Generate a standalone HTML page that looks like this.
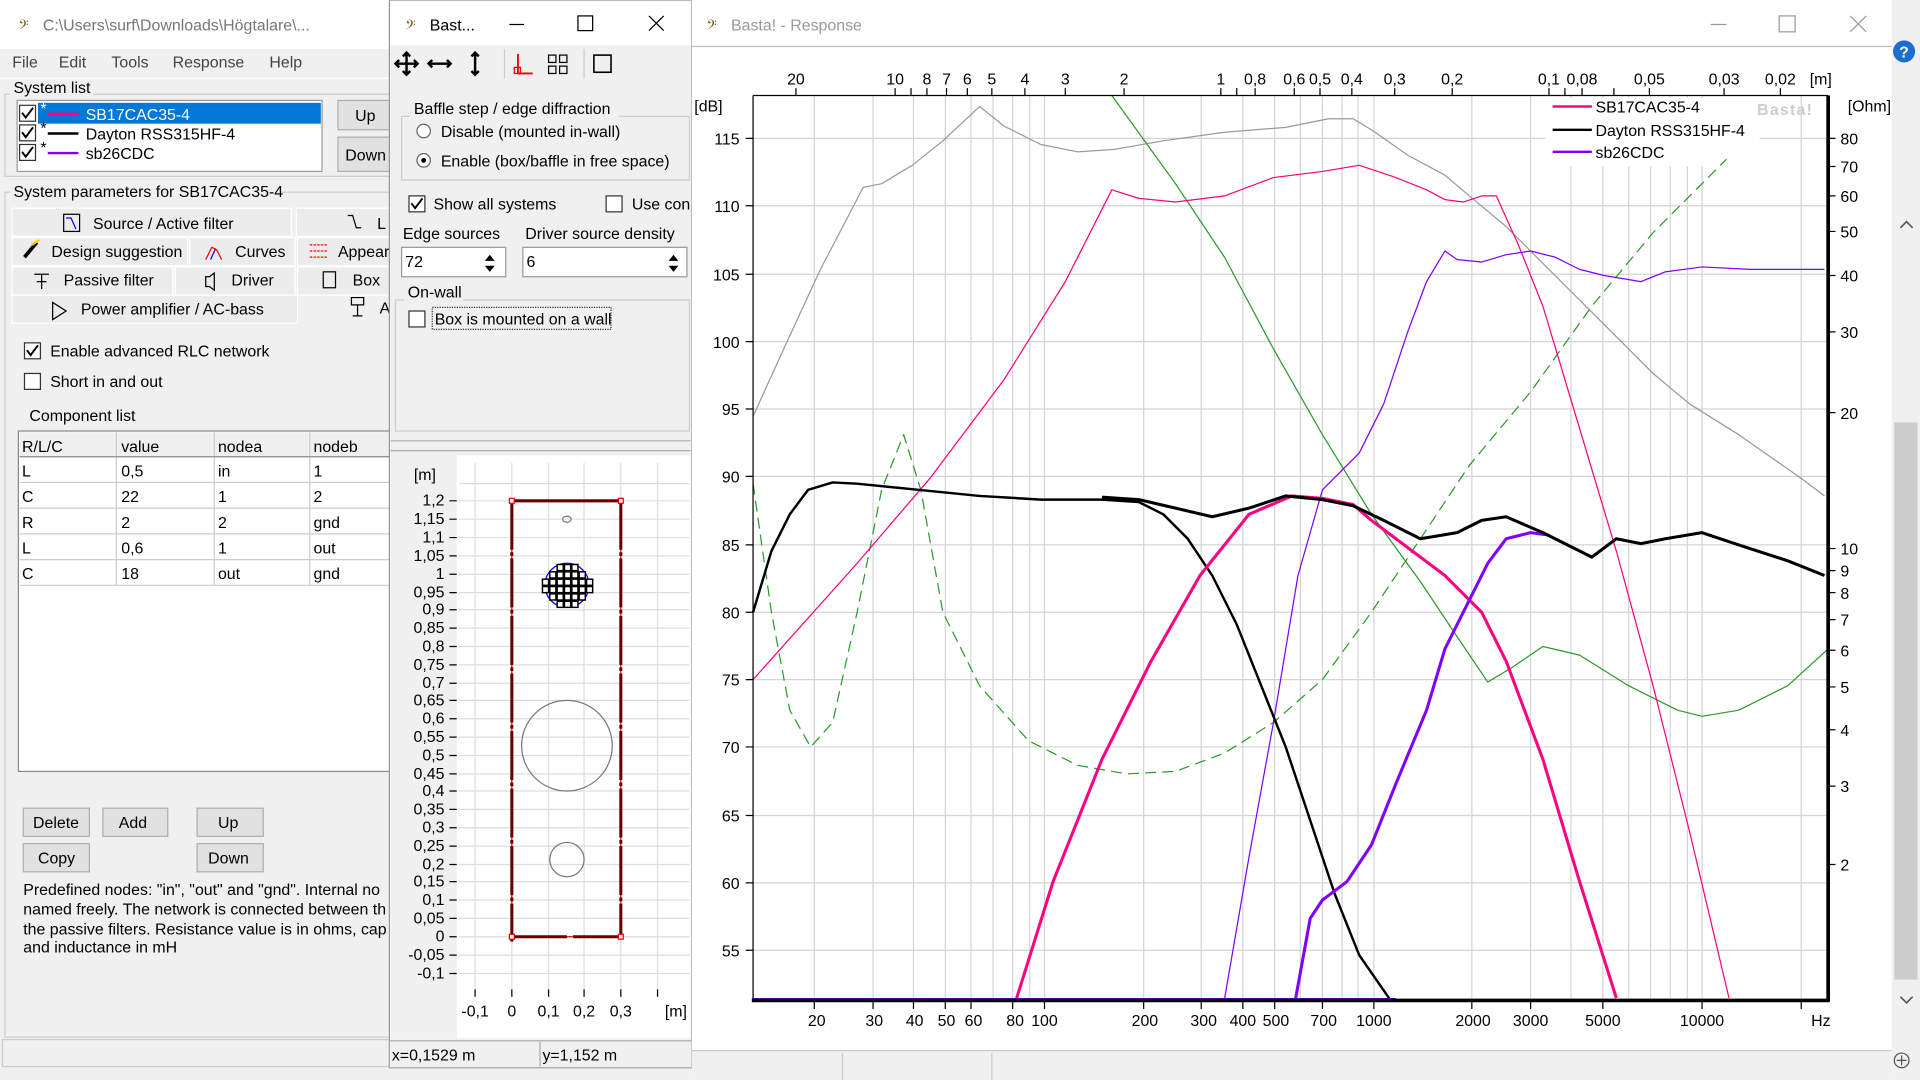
<!DOCTYPE html>
<html><head><meta charset="utf-8"><style>
html,body{margin:0;padding:0;width:1920px;height:1080px;overflow:hidden;background:#f0f0f0}
svg{display:block}
text{font-family:"Liberation Sans","DejaVu Sans",sans-serif;font-size:13px}
</style></head><body>
<svg width="1920" height="1080" viewBox="0 0 1568 882" preserveAspectRatio="none" xmlns="http://www.w3.org/2000/svg">
<rect x="0" y="0" width="1568" height="882" fill="#f0f0f0"/>
<!-- LEFT WINDOW -->
<rect x="0" y="0" width="320" height="40" fill="#fff"/>
<text x="15" y="26" font-size="18" fill="#7a6a20" font-family="DejaVu Sans">𝄢</text>
<text x="35" y="25" font-size="14" fill="#777">C:\Users\surf\Downloads\Högtalare\...</text>
<text x="10" y="55" font-size="14" fill="#444">File</text><text x="48" y="55" font-size="14" fill="#444">Edit</text><text x="91" y="55" font-size="14" fill="#444">Tools</text><text x="141" y="55" font-size="14" fill="#444">Response</text><text x="220" y="55" font-size="14" fill="#444">Help</text>
<line x1="0" y1="64" x2="320" y2="64" stroke="#fff"/>
<rect x="4" y="77" width="320" height="67" fill="none" stroke="#ccc"/>
<rect x="8" y="66" width="68" height="14" fill="#f0f0f0"/><text x="11" y="76">System list</text>
<rect x="14" y="82" width="249" height="58" fill="#fff" stroke="#999"/>
<rect x="31" y="84" width="231" height="17" fill="#0078d7"/>
<g fill="#fff" stroke="#333"><rect x="16" y="86" width="13" height="13"/><rect x="16" y="102" width="13" height="13"/><rect x="16" y="118" width="13" height="13"/></g>
<g fill="none" stroke="#000" stroke-width="1.6"><path d="M18 92l3 4 6-8M18 108l3 4 6-8M18 124l3 4 6-8"/></g>
<text x="33" y="93" font-size="9" fill="#fff">*</text><text x="33" y="109" font-size="9">*</text><text x="33" y="125" font-size="9">*</text>
<line x1="39" y1="93" x2="64" y2="93" stroke="#ff0080" stroke-width="2"/>
<line x1="39" y1="109" x2="64" y2="109" stroke="#000" stroke-width="2"/>
<line x1="39" y1="125" x2="64" y2="125" stroke="#8000ff" stroke-width="2"/>
<text x="70" y="98" fill="#fff">SB17CAC35-4</text><text x="70" y="114">Dayton RSS315HF-4</text><text x="70" y="130">sb26CDC</text>
<rect x="276" y="82" width="44" height="24" fill="#e1e1e1" stroke="#adadad"/><text x="290" y="99">Up</text>
<rect x="276" y="112" width="44" height="28" fill="#e1e1e1" stroke="#adadad"/><text x="282" y="131">Down</text>
<rect x="4" y="157" width="320" height="690" fill="none" stroke="#ccc"/>
<rect x="8" y="149" width="222" height="14" fill="#f0f0f0"/><text x="11" y="161">System parameters for SB17CAC35-4</text>
<g fill="#ececec" stroke="#fff">
<rect x="10" y="170" width="228" height="23"/><rect x="242" y="170" width="80" height="23"/>
<rect x="10" y="194" width="143" height="23"/><rect x="155" y="194" width="86" height="23"/><rect x="243" y="194" width="80" height="23"/>
<rect x="10" y="218" width="131" height="23"/><rect x="143" y="218" width="98" height="23"/><rect x="243" y="218" width="80" height="23"/>
<rect x="10" y="241" width="233" height="23"/></g>
<rect x="52" y="175" width="13" height="14" fill="none" stroke="#000"/><path d="M54 178h4l4 9" stroke="#00f" fill="none"/>
<text x="76" y="187">Source / Active filter</text>
<path d="M284 176l4 0 3 10 4 0" stroke="#000" fill="none"/><text x="308" y="187">L</text>
<path d="M20 210l10-12" stroke="#000" stroke-width="3"/><path d="M26 200l6-4" stroke="#fc0" stroke-width="2"/>
<text x="42" y="210">Design suggestion</text>
<path d="M168 212l5-10 4 2 4 8" stroke="#f00" fill="none"/><path d="M172 212l4-9" stroke="#00f"/>
<text x="192" y="210">Curves</text>
<path d="M253 200h14M253 205h14M253 210h14" stroke="#f00" stroke-dasharray="2 1"/><text x="276" y="210">Appear</text>
<path d="M28 224h12M34 224v12M30 230h8" stroke="#000" fill="none"/><text x="52" y="233">Passive filter</text>
<path d="M168 226h3l4-3v14l-4-3h-3z" stroke="#000" fill="none"/><text x="189" y="233">Driver</text>
<rect x="264" y="222" width="10" height="13" fill="none" stroke="#000"/><text x="288" y="233">Box</text>
<path d="M43 247l11 7-11 7z" stroke="#000" fill="none"/><text x="66" y="257">Power amplifier / AC-bass</text>
<path d="M287 243h10v6h-10zM292 249v9M288 258h8" stroke="#000" fill="none"/><text x="310" y="256">A</text>
<rect x="20" y="280" width="13" height="13" fill="#fff" stroke="#333"/><path d="M22 286l3 4 6-8" stroke="#000" stroke-width="1.6" fill="none"/>
<text x="41" y="291">Enable advanced RLC network</text>
<rect x="20" y="305" width="13" height="13" fill="#fff" stroke="#333"/><text x="41" y="316">Short in and out</text>
<text x="24" y="344">Component list</text>
<rect x="15" y="352" width="305" height="278" fill="#fff" stroke="#888"/>
<rect x="16" y="353" width="304" height="20" fill="#f0f0f0"/>
<g stroke="#ccc"><line x1="95" y1="353" x2="95" y2="478"/><line x1="175" y1="353" x2="175" y2="478"/><line x1="253" y1="353" x2="253" y2="478"/>
<line x1="16" y1="373" x2="320" y2="373" stroke="#888"/><line x1="16" y1="394" x2="320" y2="394"/><line x1="16" y1="415" x2="320" y2="415"/><line x1="16" y1="436" x2="320" y2="436"/><line x1="16" y1="457" x2="320" y2="457"/><line x1="16" y1="478" x2="320" y2="478"/></g>
<text x="18" y="369">R/L/C</text><text x="99" y="369">value</text><text x="178" y="369">nodea</text><text x="256" y="369">nodeb</text>
<text x="18" y="389">L</text><text x="99" y="389">0,5</text><text x="178" y="389">in</text><text x="256" y="389">1</text>
<text x="18" y="410">C</text><text x="99" y="410">22</text><text x="178" y="410">1</text><text x="256" y="410">2</text>
<text x="18" y="431">R</text><text x="99" y="431">2</text><text x="178" y="431">2</text><text x="256" y="431">gnd</text>
<text x="18" y="452">L</text><text x="99" y="452">0,6</text><text x="178" y="452">1</text><text x="256" y="452">out</text>
<text x="18" y="473">C</text><text x="99" y="473">18</text><text x="178" y="473">out</text><text x="256" y="473">gnd</text>
<g fill="#e1e1e1" stroke="#adadad"><rect x="19" y="660" width="54" height="23"/><rect x="84" y="660" width="53" height="23"/><rect x="161" y="660" width="54" height="23"/><rect x="19" y="689" width="54" height="23"/><rect x="161" y="689" width="54" height="23"/></g>
<text x="27" y="676">Delete</text><text x="97" y="676">Add</text><text x="178" y="676">Up</text><text x="31" y="705">Copy</text><text x="170" y="705">Down</text>
<text x="19" y="731">Predefined nodes: "in", "out" and "gnd". Internal no</text>
<text x="19" y="747">named freely. The network is connected between th</text>
<text x="19" y="763">the passive filters. Resistance value is in ohms, cap</text>
<text x="19" y="778">and inductance in mH</text>
<rect x="2" y="849" width="320" height="22" fill="#f0f0f0" stroke="#ccc"/>
<!-- MIDDLE WINDOW -->
<rect x="318" y="0" width="247" height="872" fill="#f0f0f0" stroke="#999"/>
<rect x="319" y="1" width="245" height="36" fill="#fff"/>
<text x="331" y="26" font-size="18" fill="#7a6a20" font-family="DejaVu Sans">𝄢</text><text x="351" y="25" font-size="14">Bast...</text>
<line x1="416" y1="20" x2="428" y2="20" stroke="#000"/><rect x="472" y="13" width="12" height="12" fill="none" stroke="#000"/><path d="M530 13l12 12M542 13l-12 12" stroke="#000"/>
<g stroke="#000" stroke-width="2" fill="none">
<path d="M332 43v18M323 52h18M329 46l3-3 3 3M329 58l3 3 3-3M326 49l-3 3 3 3M338 49l3 3-3 3"/>
<path d="M350 52h18M353 49l-3 3 3 3M365 49l3 3-3 3"/>
<path d="M388 43v18M385 46l3-3 3 3M385 58l3 3 3-3"/></g>
<line x1="412" y1="40" x2="412" y2="64" stroke="#ccc"/>
<path d="M423 44v16h12" stroke="#e00" stroke-width="1.5" fill="none"/><rect x="420" y="55" width="5" height="5" fill="none" stroke="#e00"/>
<g fill="none" stroke="#000"><rect x="448" y="45" width="6" height="6"/><rect x="457" y="45" width="6" height="6"/><rect x="448" y="54" width="6" height="6"/><rect x="457" y="54" width="6" height="6"/></g>
<line x1="477" y1="40" x2="477" y2="64" stroke="#ccc"/><rect x="485" y="45" width="14" height="14" fill="none" stroke="#000" stroke-width="1.3"/>
<rect x="328" y="95" width="235" height="52" fill="none" stroke="#ccc"/>
<rect x="335" y="82" width="170" height="14" fill="#f0f0f0"/><text x="338" y="93">Baffle step / edge diffraction</text>
<circle cx="346" cy="107" r="5.5" fill="#fff" stroke="#666"/><text x="360" y="112">Disable (mounted in-wall)</text>
<circle cx="346" cy="131" r="5.5" fill="#fff" stroke="#666"/><circle cx="346" cy="131" r="2" fill="#000"/><text x="360" y="136">Enable (box/baffle in free space)</text>
<rect x="334" y="160" width="13" height="13" fill="#fff" stroke="#333"/><path d="M336 166l3 4 6-8" stroke="#000" stroke-width="1.6" fill="none"/><text x="354" y="171">Show all systems</text>
<rect x="495" y="160" width="13" height="13" fill="#fff" stroke="#333"/><text x="516" y="171">Use con</text>
<text x="329" y="195">Edge sources</text><text x="429" y="195">Driver source density</text>
<rect x="328" y="202" width="85" height="24" fill="#fff" stroke="#999"/><text x="331" y="218">72</text><path d="M400 208l4 5h-8zM400 222l4-5h-8z" fill="#000"/>
<rect x="427" y="202" width="134" height="24" fill="#fff" stroke="#999"/><text x="430" y="218">6</text><path d="M550 208l4 5h-8zM550 222l4-5h-8z" fill="#000"/>
<rect x="323" y="245" width="240" height="107" fill="none" stroke="#ccc"/>
<rect x="330" y="232" width="48" height="14" fill="#f0f0f0"/><text x="333" y="243">On-wall</text>
<rect x="334" y="254" width="13" height="13" fill="#fff" stroke="#333"/><text x="355" y="265">Box is mounted on a wall</text>
<rect x="353" y="251" width="146" height="18" fill="none" stroke="#333" stroke-dasharray="1 1"/>
<line x1="319" y1="360" x2="564" y2="360" stroke="#aaa"/><line x1="319" y1="368" x2="564" y2="368" stroke="#aaa"/>
<rect x="320" y="372" width="244" height="476" fill="#fff"/>
<rect x="320" y="372" width="53" height="476" fill="#f0f0f0"/>
<g stroke="#ddd">
<line x1="388" y1="378" x2="388" y2="808"/><line x1="418" y1="378" x2="418" y2="808"/><line x1="448" y1="378" x2="448" y2="808"/><line x1="477" y1="378" x2="477" y2="808"/><line x1="507" y1="378" x2="507" y2="808"/><line x1="537" y1="378" x2="537" y2="808"/>
<line x1="375" y1="395" x2="563" y2="395"/><line x1="375" y1="409" x2="563" y2="409"/><line x1="375" y1="424" x2="563" y2="424"/><line x1="375" y1="439" x2="563" y2="439"/><line x1="375" y1="454" x2="563" y2="454"/><line x1="375" y1="469" x2="563" y2="469"/><line x1="375" y1="484" x2="563" y2="484"/><line x1="375" y1="498" x2="563" y2="498"/><line x1="375" y1="513" x2="563" y2="513"/><line x1="375" y1="528" x2="563" y2="528"/><line x1="375" y1="543" x2="563" y2="543"/><line x1="375" y1="558" x2="563" y2="558"/><line x1="375" y1="572" x2="563" y2="572"/><line x1="375" y1="587" x2="563" y2="587"/><line x1="375" y1="602" x2="563" y2="602"/><line x1="375" y1="617" x2="563" y2="617"/><line x1="375" y1="632" x2="563" y2="632"/><line x1="375" y1="646" x2="563" y2="646"/><line x1="375" y1="661" x2="563" y2="661"/><line x1="375" y1="676" x2="563" y2="676"/><line x1="375" y1="691" x2="563" y2="691"/><line x1="375" y1="706" x2="563" y2="706"/><line x1="375" y1="720" x2="563" y2="720"/><line x1="375" y1="735" x2="563" y2="735"/><line x1="375" y1="750" x2="563" y2="750"/><line x1="375" y1="765" x2="563" y2="765"/><line x1="375" y1="780" x2="563" y2="780"/><line x1="375" y1="795" x2="563" y2="795"/>
</g>
<g font-size="12" text-anchor="end">
<text x="338" y="392" text-anchor="start">[m]</text>
<text x="363" y="413">1,2</text><text x="363" y="428">1,15</text><text x="363" y="443">1,1</text><text x="363" y="458">1,05</text><text x="363" y="473">1</text><text x="363" y="488">0,95</text><text x="363" y="502">0,9</text><text x="363" y="517">0,85</text><text x="363" y="532">0,8</text><text x="363" y="547">0,75</text><text x="363" y="562">0,7</text><text x="363" y="576">0,65</text><text x="363" y="591">0,6</text><text x="363" y="606">0,55</text><text x="363" y="621">0,5</text><text x="363" y="636">0,45</text><text x="363" y="650">0,4</text><text x="363" y="665">0,35</text><text x="363" y="680">0,3</text><text x="363" y="695">0,25</text><text x="363" y="710">0,2</text><text x="363" y="724">0,15</text><text x="363" y="739">0,1</text><text x="363" y="754">0,05</text><text x="363" y="769">0</text><text x="363" y="784">-0,05</text><text x="363" y="799">-0,1</text>
</g>
<g stroke="#000"><path d="M367 409h6M367 424h6M367 439h6M367 454h6M367 469h6M367 484h6M367 498h6M367 513h6M367 528h6M367 543h6M367 558h6M367 572h6M367 587h6M367 602h6M367 617h6M367 632h6M367 646h6M367 661h6M367 676h6M367 691h6M367 706h6M367 720h6M367 735h6M367 750h6M367 765h6M367 780h6M367 795h6M388 808v6M418 808v6M448 808v6M477 808v6M507 808v6M537 808v6"/></g>
<g font-size="12" text-anchor="middle"><text x="388" y="830">-0,1</text><text x="418" y="830">0</text><text x="448" y="830">0,1</text><text x="477" y="830">0,2</text><text x="507" y="830">0,3</text><text x="552" y="830">[m]</text></g>
<rect x="418" y="409" width="89" height="356" fill="none" stroke="#e00"/>
<path d="M418 409h89M418 765h45M468 765h39" stroke="#600" stroke-width="2.5"/>
<path d="M418 409v360M507 409v356" stroke="#600" stroke-width="2.5" stroke-dasharray="40 2 3 2"/>
<g fill="#fff" stroke="#e00"><rect x="416" y="407" width="4" height="4"/><rect x="505" y="407" width="4" height="4"/><rect x="416" y="763" width="4" height="4"/><rect x="505" y="763" width="4" height="4"/></g>
<ellipse cx="463" cy="424" rx="3.5" ry="2.5" fill="none" stroke="#777"/>
<circle cx="463" cy="478" r="18" fill="none" stroke="#00f"/>
<g fill="#fff" stroke="#000" stroke-width="1.2">
<rect x="455" y="461" width="5" height="5"/><rect x="461" y="461" width="5" height="5"/><rect x="467" y="461" width="5" height="5"/>
<rect x="449" y="467" width="5" height="5"/><rect x="455" y="467" width="5" height="5"/><rect x="461" y="467" width="5" height="5"/><rect x="467" y="467" width="5" height="5"/><rect x="473" y="467" width="5" height="5"/>
<rect x="443" y="473" width="5" height="5"/><rect x="449" y="473" width="5" height="5"/><rect x="455" y="473" width="5" height="5"/><rect x="461" y="473" width="5" height="5"/><rect x="467" y="473" width="5" height="5"/><rect x="473" y="473" width="5" height="5"/><rect x="479" y="473" width="5" height="5"/>
<rect x="443" y="479" width="5" height="5"/><rect x="449" y="479" width="5" height="5"/><rect x="455" y="479" width="5" height="5"/><rect x="461" y="479" width="5" height="5"/><rect x="467" y="479" width="5" height="5"/><rect x="473" y="479" width="5" height="5"/><rect x="479" y="479" width="5" height="5"/>
<rect x="449" y="485" width="5" height="5"/><rect x="455" y="485" width="5" height="5"/><rect x="461" y="485" width="5" height="5"/><rect x="467" y="485" width="5" height="5"/><rect x="473" y="485" width="5" height="5"/>
<rect x="455" y="491" width="5" height="5"/><rect x="461" y="491" width="5" height="5"/><rect x="467" y="491" width="5" height="5"/></g>
<circle cx="463" cy="609" r="37" fill="none" stroke="#777"/>
<circle cx="463" cy="702" r="14" fill="none" stroke="#777"/>
<rect x="318" y="850" width="247" height="22" fill="#f0f0f0" stroke="#aaa"/>
<line x1="441" y1="851" x2="441" y2="871" stroke="#aaa"/>
<text x="320" y="866">x=0,1529 m</text><text x="443" y="866">y=1,152 m</text>
<!-- RIGHT WINDOW -->
<rect x="565" y="0" width="1003" height="882" fill="#fff"/>
<line x1="565" y1="38" x2="1545" y2="38" stroke="#bbb"/>
<text x="577" y="26" font-size="18" fill="#7a6a20" font-family="DejaVu Sans">𝄢</text><text x="597" y="25" font-size="14" fill="#999">Basta! - Response</text>
<line x1="1397" y1="20" x2="1410" y2="20" stroke="#999"/><rect x="1453" y="13" width="13" height="13" fill="none" stroke="#999"/><path d="M1511 13l13 13M1524 13l-13 13" stroke="#999"/>
<rect x="1545" y="0" width="23" height="882" fill="#f0f0f0"/>
<circle cx="1555" cy="42" r="9" fill="#1a6fd0"/><text x="1551" y="47" font-size="12" fill="#fff" font-weight="bold">?</text>
<rect x="1547" y="345" width="19" height="455" fill="#cdcdcd"/>
<path d="M1552 186l5-5 5 5M1552 814l5 5 5-5" stroke="#555" fill="none" stroke-width="1.3"/>
<circle cx="1553" cy="866" r="6" fill="none" stroke="#555"/><path d="M1549 866h8M1553 862v8" stroke="#555"/>
<rect x="565" y="858" width="980" height="24" fill="#f0f0f0"/><line x1="565" y1="858" x2="1545" y2="858" stroke="#ccc"/>
<line x1="688" y1="860" x2="688" y2="882" stroke="#ccc"/><line x1="810" y1="860" x2="810" y2="882" stroke="#ccc"/>
<!-- plot grid -->
<g stroke="#d4d4d4">
<line x1="665" y1="78" x2="665" y2="816"/><line x1="713" y1="78" x2="713" y2="816"/><line x1="746" y1="78" x2="746" y2="816"/><line x1="772" y1="78" x2="772" y2="816"/><line x1="793" y1="78" x2="793" y2="816"/><line x1="811" y1="78" x2="811" y2="816"/><line x1="827" y1="78" x2="827" y2="816"/><line x1="841" y1="78" x2="841" y2="816"/><line x1="853" y1="78" x2="853" y2="816"/><line x1="934" y1="78" x2="934" y2="816"/><line x1="981" y1="78" x2="981" y2="816"/><line x1="1015" y1="78" x2="1015" y2="816"/><line x1="1041" y1="78" x2="1041" y2="816"/><line x1="1062" y1="78" x2="1062" y2="816"/><line x1="1080" y1="78" x2="1080" y2="816"/><line x1="1096" y1="78" x2="1096" y2="816"/><line x1="1109" y1="78" x2="1109" y2="816"/><line x1="1122" y1="78" x2="1122" y2="816"/><line x1="1202" y1="78" x2="1202" y2="816"/><line x1="1250" y1="78" x2="1250" y2="816"/><line x1="1283" y1="78" x2="1283" y2="816"/><line x1="1309" y1="78" x2="1309" y2="816"/><line x1="1330" y1="78" x2="1330" y2="816"/><line x1="1348" y1="78" x2="1348" y2="816"/><line x1="1364" y1="78" x2="1364" y2="816"/><line x1="1378" y1="78" x2="1378" y2="816"/><line x1="1390" y1="78" x2="1390" y2="816"/><line x1="1471" y1="78" x2="1471" y2="816"/>
<line x1="615" y1="113" x2="1493" y2="113"/><line x1="615" y1="168" x2="1493" y2="168"/><line x1="615" y1="224" x2="1493" y2="224"/><line x1="615" y1="279" x2="1493" y2="279"/><line x1="615" y1="334" x2="1493" y2="334"/><line x1="615" y1="389" x2="1493" y2="389"/><line x1="615" y1="445" x2="1493" y2="445"/><line x1="615" y1="500" x2="1493" y2="500"/><line x1="615" y1="555" x2="1493" y2="555"/><line x1="615" y1="610" x2="1493" y2="610"/><line x1="615" y1="666" x2="1493" y2="666"/><line x1="615" y1="721" x2="1493" y2="721"/><line x1="615" y1="776" x2="1493" y2="776"/>
</g>
<rect x="1262" y="80" width="175" height="56" fill="#fff"/>
<!-- curves -->
<g fill="none" stroke-linejoin="round">
<polyline stroke="#999" stroke-width="1" points="615,340 640,285 670,220 705,153 720,150 745,135 770,115 800,87 820,103 850,118 880,124 910,122 950,115 1000,108 1050,104 1085,97 1105,97 1120,106 1150,127 1180,143 1200,160 1230,185 1255,210 1270,225 1300,255 1330,285 1350,305 1380,330 1420,355 1470,390 1490,405"/>
<polyline stroke="#2a9a2a" stroke-width="1" points="908,78 960,150 1000,210 1040,285 1080,355 1120,420 1160,475 1190,520 1215,557 1235,545 1260,528 1290,535 1330,560 1370,580 1390,585 1420,580 1460,560 1493,530"/>
<polyline stroke="#2a9a2a" stroke-width="1" stroke-dasharray="9 5" points="615,395 630,500 645,580 662,610 680,590 700,500 720,400 738,355 752,400 770,500 800,560 840,605 880,625 920,632 960,630 1000,615 1040,590 1080,555 1120,500 1160,440 1200,380 1250,320 1300,250 1350,190 1410,130"/>
<polyline stroke="#ff0080" stroke-width="1" points="615,555 700,460 760,390 820,310 870,230 908,155 930,162 960,165 1000,160 1040,145 1080,140 1110,135 1140,145 1165,155 1180,163 1195,165 1210,160 1222,160 1240,200 1260,250 1290,350 1320,450 1350,560 1380,680 1412,815"/>
<polyline stroke="#8000ff" stroke-width="1" points="1000,816 1020,700 1040,590 1060,470 1080,400 1100,380 1110,370 1130,330 1150,270 1165,230 1180,205 1190,212 1210,214 1230,208 1250,205 1270,210 1290,220 1310,225 1340,230 1360,222 1390,218 1430,220 1490,220"/>
<polyline stroke="#000" stroke-width="2" points="615,500 630,450 645,420 660,400 680,394 700,395 750,400 800,405 850,408 900,408 930,410 950,420 970,440 990,470 1010,510 1030,560 1050,610 1070,670 1090,730 1110,780 1135,816"/>
<polyline stroke="#ff0080" stroke-width="2.5" points="830,816 860,720 900,620 940,540 980,470 1020,420 1055,405 1080,407 1105,412 1120,425 1140,440 1160,455 1180,470 1195,485 1210,500 1230,540 1260,620 1290,720 1320,815"/>
<polyline stroke="#8000ff" stroke-width="2.5" points="1058,816 1070,750 1080,735 1100,720 1120,690 1140,640 1165,580 1180,530 1200,490 1215,460 1230,440 1250,435 1265,437"/>
<polyline stroke="#000" stroke-width="2.5" points="900,406 930,408 960,415 990,422 1020,415 1050,405 1080,408 1105,413 1130,425 1160,440 1190,435 1210,425 1230,422 1260,435 1280,445 1300,455 1320,440 1340,444 1360,440 1390,435 1420,445 1460,458 1490,470"/>
</g>
<line x1="615" y1="816" x2="1140" y2="816" stroke="#8000ff" stroke-width="2"/>
<!-- axes -->
<line x1="615" y1="78" x2="1493" y2="78" stroke="#000" stroke-width="1"/>
<line x1="615" y1="78" x2="615" y2="817" stroke="#000" stroke-width="1"/>
<line x1="614" y1="817" x2="1494" y2="817" stroke="#000" stroke-width="3"/>
<line x1="1493" y1="78" x2="1493" y2="818" stroke="#000" stroke-width="3"/>
<g stroke="#000"><path d="M609 113h6M609 168h6M609 224h6M609 279h6M609 334h6M609 389h6M609 445h6M609 500h6M609 555h6M609 610h6M609 666h6M609 721h6M609 776h6"/>
<path d="M1493 113h6M1493 136h6M1493 160h6M1493 189h6M1493 225h6M1493 271h6M1493 337h6M1493 448h6M1493 466h6M1493 484h6M1493 506h6M1493 531h6M1493 561h6M1493 596h6M1493 642h6M1493 706h6"/>
<path d="M650 72v6M731 72v6M744 72v6M757 72v6M773 72v6M790 72v6M810 72v6M837 72v6M870 72v6M918 72v6M997 72v6M1010 72v6M1025 72v6M1057 72v6M1078 72v6M1104 72v6M1139 72v6M1186 72v6M1265 72v6M1278 72v6M1292 72v6M1318 72v6M1347 72v6M1408 72v6M1454 72v6"/>
<path d="M665 818v6M713 818v6M746 818v6M772 818v6M793 818v6M827 818v6M853 818v6M934 818v6M981 818v6M1015 818v6M1041 818v6M1080 818v6M1122 818v6M1202 818v6M1250 818v6M1309 818v6M1390 818v6M1471 818v6"/></g>
<g text-anchor="end" font-size="14"><text x="604" y="118">115</text><text x="604" y="173">110</text><text x="604" y="229">105</text><text x="604" y="284">100</text><text x="604" y="339">95</text><text x="604" y="394">90</text><text x="604" y="450">85</text><text x="604" y="505">80</text><text x="604" y="560">75</text><text x="604" y="615">70</text><text x="604" y="671">65</text><text x="604" y="726">60</text><text x="604" y="781">55</text></g>
<text x="567" y="91" font-size="13">[dB]</text><text x="1509" y="91" font-size="13">[Ohm]</text>
<g font-size="14"><text x="1503" y="118">80</text><text x="1503" y="141">70</text><text x="1503" y="165">60</text><text x="1503" y="194">50</text><text x="1503" y="230">40</text><text x="1503" y="276">30</text><text x="1503" y="342">20</text><text x="1503" y="453">10</text><text x="1503" y="471">9</text><text x="1503" y="489">8</text><text x="1503" y="511">7</text><text x="1503" y="536">6</text><text x="1503" y="566">5</text><text x="1503" y="601">4</text><text x="1503" y="647">3</text><text x="1503" y="711">2</text></g>
<g font-size="14" text-anchor="middle"><text x="650" y="69">20</text><text x="731" y="69">10</text><text x="757" y="69">8</text><text x="773" y="69">7</text><text x="790" y="69">6</text><text x="810" y="69">5</text><text x="837" y="69">4</text><text x="870" y="69">3</text><text x="918" y="69">2</text><text x="997" y="69">1</text><text x="1025" y="69">0,8</text><text x="1057" y="69">0,6</text><text x="1078" y="69">0,5</text><text x="1104" y="69">0,4</text><text x="1139" y="69">0,3</text><text x="1186" y="69">0,2</text><text x="1265" y="69">0,1</text><text x="1292" y="69">0,08</text><text x="1347" y="69">0,05</text><text x="1408" y="69">0,03</text><text x="1454" y="69">0,02</text><text x="1487" y="69">[m]</text></g>
<g font-size="14" text-anchor="middle"><text x="667" y="838">20</text><text x="714" y="838">30</text><text x="747" y="838">40</text><text x="773" y="838">50</text><text x="795" y="838">60</text><text x="829" y="838">80</text><text x="853" y="838">100</text><text x="935" y="838">200</text><text x="983" y="838">300</text><text x="1015" y="838">400</text><text x="1042" y="838">500</text><text x="1081" y="838">700</text><text x="1122" y="838">1000</text><text x="1203" y="838">2000</text><text x="1250" y="838">3000</text><text x="1309" y="838">5000</text><text x="1390" y="838">10000</text><text x="1487" y="838">Hz</text></g>
<line x1="1268" y1="87" x2="1300" y2="87" stroke="#ff0080" stroke-width="2"/><line x1="1268" y1="106" x2="1300" y2="106" stroke="#000" stroke-width="2"/><line x1="1268" y1="124" x2="1300" y2="124" stroke="#8000ff" stroke-width="2"/>
<text x="1303" y="92">SB17CAC35-4</text><text x="1303" y="111">Dayton RSS315HF-4</text><text x="1303" y="129">sb26CDC</text>
<text x="1435" y="94" font-size="16" fill="#cccccc" font-weight="bold" letter-spacing="1">Basta!</text>
</svg>
</body></html>
